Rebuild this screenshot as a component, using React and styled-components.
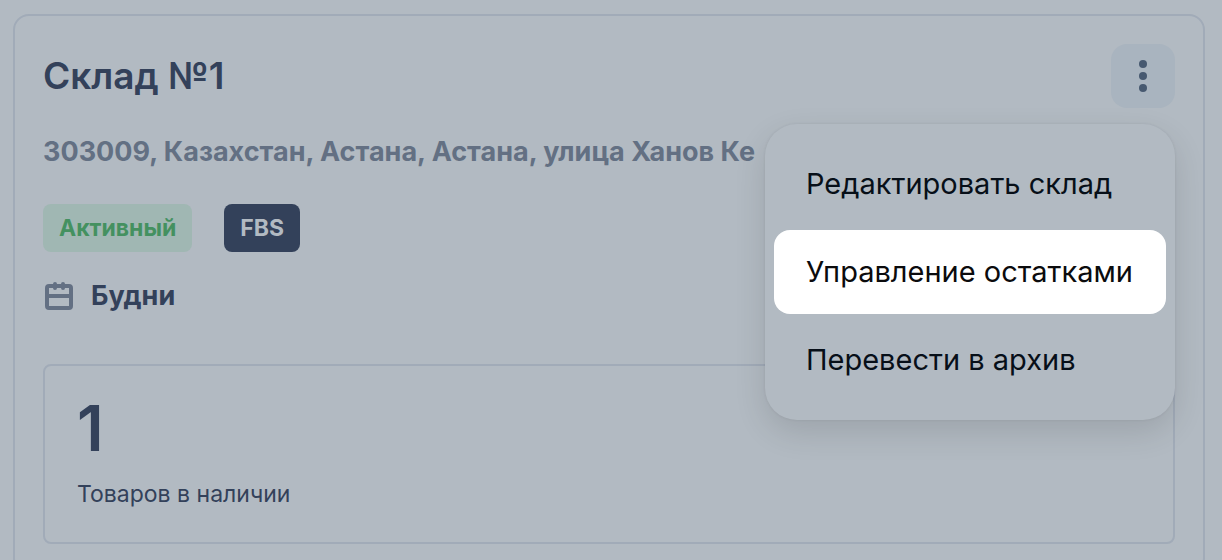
import React from "react";
import styled, { createGlobalStyle } from "styled-components";

const GlobalStyle = createGlobalStyle`
  *, *::before, *::after { box-sizing: border-box; }
  body {
    margin: 0;
    background: #b2bac2;
    color: #33415a;
    font-family: Inter, "Noto Sans", sans-serif;
  }
  h2, p, ul { margin: 0; padding: 0; }
`;

const Page = styled.main`
  height: 100vh;
  overflow: hidden;
  padding: 14px 17px 0 13px;
`;

const Card = styled.article`
  display: flex;
  flex-direction: column;
  padding: 28px;
  border: 2px solid #a1abb8;
  border-radius: 16px;
`;

const Header = styled.header`
  position: relative;
  display: flex;
  align-items: center;
  justify-content: space-between;
  height: 64px;
`;

const Title = styled.h2`
  font-size: 37px;
  line-height: 44px;
  font-weight: 600;
`;

const MoreButton = styled.button`
  display: flex;
  align-items: center;
  justify-content: center;
  width: 64px;
  height: 64px;
  padding: 0;
  border: 0;
  border-radius: 16px;
  background: #a9b4bf;
  color: #475970;
  cursor: pointer;
`;

const Menu = styled.ul`
  position: absolute;
  z-index: 1;
  top: calc(100% + 16px);
  right: 0;
  display: flex;
  flex-direction: column;
  gap: 4px;
  min-width: 410px;
  padding: 18px 9px;
  list-style: none;
  border-radius: 32px;
  background: #b2bac2;
  box-shadow: 0 0 3px rgba(0, 0, 0, 0.08), 0 12px 32px rgba(0, 0, 0, 0.12);
`;

const MenuItem = styled.button`
  display: block;
  width: 100%;
  height: 84px;
  padding: 0 32px;
  border: 0;
  border-radius: 16px;
  background: ${({ $active }) => ($active ? "#fff" : "transparent")};
  color: ${({ $active }) => ($active ? "#0b0b0d" : "#070f18")};
  font-family: inherit;
  font-size: 29px;
  line-height: 40px;
  text-align: left;
  white-space: nowrap;
  cursor: pointer;
`;

const Address = styled.p`
  margin-top: 28px;
  overflow: hidden;
  color: #637083;
  font-size: 27px;
  line-height: 32px;
  font-weight: 700;
  white-space: nowrap;
`;

const Badges = styled.div`
  display: flex;
  gap: 32px;
  margin-top: 36px;
`;

const Badge = styled.span`
  padding: 0 16px;
  border-radius: 8px;
  background: ${({ $tone }) => ($tone === "success" ? "#a0b7b3" : "#33415a")};
  color: ${({ $tone }) => ($tone === "success" ? "#449160" : "#b2bac2")};
  font-size: 23px;
  line-height: 48px;
  font-weight: 700;
`;

const Schedule = styled.p`
  display: flex;
  align-items: center;
  gap: 16px;
  margin-top: 28px;
  font-size: 27px;
  line-height: 32px;
  font-weight: 700;

  svg { color: #637083; }
`;

const Stock = styled.section`
  margin-top: 52px;
  padding: 30px 32px;
  border: 2px solid #a1abb8;
  border-radius: 8px;
`;

const StockCount = styled.p`
  font-size: 63px;
  line-height: 64px;
  font-weight: 600;
`;

const StockLabel = styled.p`
  margin-top: 16px;
  font-size: 23px;
  line-height: 36px;
`;

const DotsIcon = () => (
  <svg width="32" height="32" viewBox="0 0 32 32" fill="currentColor" aria-hidden="true">
    <circle cx="16" cy="4" r="4" />
    <circle cx="16" cy="16" r="4" />
    <circle cx="16" cy="28" r="4" />
  </svg>
);

const CalendarIcon = () => (
  <svg width="32" height="32" viewBox="0 0 32 32" fill="none" stroke="currentColor" strokeWidth="4" aria-hidden="true">
    <rect x="4" y="6" width="24" height="22" rx="2" />
    <path d="M4 16h24" />
    <path d="M12 4v4M20 4v4" strokeLinecap="round" />
  </svg>
);

const actions = [
  { label: "Редактировать склад" },
  { label: "Управление остатками", active: true },
  { label: "Перевести в архив" },
];

export default function App() {
  return (
    <>
      <GlobalStyle />
      <Page>
        <Card>
          <Header>
            <Title>Склад №1</Title>
            <MoreButton type="button" aria-label="Действия" aria-expanded="true">
              <DotsIcon />
            </MoreButton>
            <Menu>
              {actions.map(({ label, active }) => (
                <li key={label}>
                  <MenuItem type="button" $active={active}>{label}</MenuItem>
                </li>
              ))}
            </Menu>
          </Header>
          <Address>303009, Казахстан, Астана, Астана, улица Ханов Ке</Address>
          <Badges>
            <Badge $tone="success">Активный</Badge>
            <Badge>FBS</Badge>
          </Badges>
          <Schedule>
            <CalendarIcon />
            Будни
          </Schedule>
          <Stock>
            <StockCount>1</StockCount>
            <StockLabel>Товаров в наличии</StockLabel>
          </Stock>
        </Card>
      </Page>
    </>
  );
}
